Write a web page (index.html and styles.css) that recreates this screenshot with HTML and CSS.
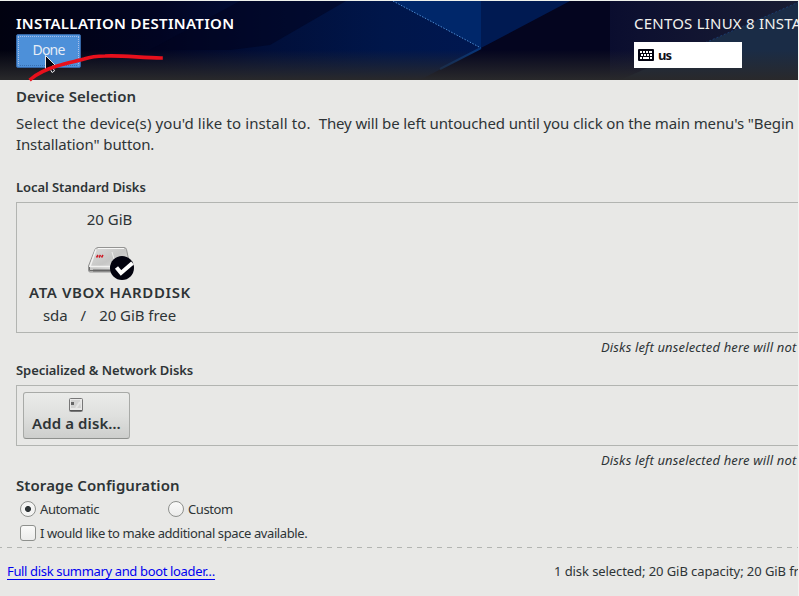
FILE: index.html
```html
<!DOCTYPE html>
<html lang="en">
<head>
<meta charset="utf-8">
<title>Installation Destination</title>
<link rel="stylesheet" href="styles.css">
</head>
<body>
<div class="screen">
  <header class="topbar">
    <svg class="backdrop" width="799" height="79" viewBox="0 1 799 79" aria-hidden="true">
      <defs>
        <linearGradient id="base" x1="0" x2="1" y1="0" y2="0">
          <stop offset="0" stop-color="#010210"/>
          <stop offset=".2" stop-color="#010422"/>
          <stop offset=".34" stop-color="#010f3a"/>
          <stop offset=".48" stop-color="#00164a"/>
          <stop offset=".6" stop-color="#001750"/>
          <stop offset=".61" stop-color="#030528"/>
          <stop offset=".7" stop-color="#05082c"/>
          <stop offset=".8" stop-color="#0d1030"/>
          <stop offset="1" stop-color="#191d33"/>
        </linearGradient>
        <linearGradient id="floor" x1="0" x2="0" y1="0" y2="1">
          <stop offset="0" stop-color="#29292b" stop-opacity="0"/>
          <stop offset=".4" stop-color="#29292b" stop-opacity=".4"/>
          <stop offset="1" stop-color="#29292b"/>
        </linearGradient>
      </defs>
      <rect y="1" width="799" height="79" fill="url(#base)"/>
      <path d="M240 1H346L270 45L230 50H150Z" fill="#01041f" opacity=".55"/>
      <path d="M393 1H481V48Z" fill="#00276a"/>
      <path d="M481 1H599L481 48Z" fill="#001a52"/>
      <path d="M570 1H610V80H420L481 48Z" fill="#04051f"/>
      <path d="M799 2L620 80H799Z" fill="#1a2c46"/>
      <path d="M393 1L481 48" stroke="#4d8bd0" stroke-dasharray="1.5 1.5"/>
      <path d="M481 48L440 69" stroke="#073578" stroke-width="2"/>
      <path d="M799 2L700 45" stroke="#1b3b6d" stroke-dasharray="2 2"/>
      <rect y="50" width="799" height="30" fill="url(#floor)"/>
    </svg>
    <div class="topbar-left">
      <h1 class="title">INSTALLATION DESTINATION</h1>
      <button class="done"><span>Done</span></button>
    </div>
    <div class="topbar-right">
      <div class="product">CENTOS LINUX 8 INSTALLATION</div>
      <div class="keyboard">
        <svg width="16" height="12" viewBox="0 0 16 12" aria-hidden="true">
          <rect width="16" height="12" rx="1" fill="#020210"/>
          <path d="M2 3h2m1 0h2m1 0h2m1 0h3M3 6h2m1 0h2m1 0h2m1 0h2M2 9h2m1 0h6m1 0h2" stroke="#fff" stroke-width="2"/>
        </svg>
        <span>us</span>
      </div>
    </div>
    <svg class="pointer" width="140" height="40" viewBox="26 48 140 40" aria-hidden="true">
      <path d="M45.500 55.500V70.500L49.500 67.500L52 72.500L54.500 71L52 66H56Z" fill="#050510" stroke="#e8e8e8"/>
      <path d="M31 79C38 73 47 69 57 66C66 63 77 61 84 59C93 56 99 56 105 56C121 55 143 58 161 58" fill="none" stroke="#e8101c" stroke-width="3.600" stroke-linecap="square"/>
    </svg>
  </header>

  <main class="content">
    <h2 class="heading device">Device Selection</h2>
    <p class="intro"><span class="lead">Select the device(s) you'd like to install to.&nbsp; </span><span class="rest">They will be left untouched until you click on the main menu's "Begin<br>Installation" button.</span></p>

    <h3 class="subheading local">Local Standard Disks</h3>
    <section class="panel disks">
      <div class="disk">
        <div class="capacity">20 GiB</div>
        <svg class="drive" width="48" height="36" viewBox="87 245 48 36" aria-hidden="true">
          <defs>
            <linearGradient id="metal" x1="0" y1="0" x2="1" y2="1">
              <stop offset="0" stop-color="#dededd"/><stop offset=".5" stop-color="#c6c6c5"/><stop offset="1" stop-color="#ededec"/>
            </linearGradient>
          </defs>
          <path d="M98 247.500H124Q126 247.500 126.500 249.500L130 266V272H90Q88.500 272 88.500 270V266L95 249.500Q96 247.500 98 247.500Z" fill="url(#metal)" stroke="#949493"/>
          <path d="M98 248.500H124" stroke="#f7f7f6"/>
          <path d="M96 249.500L90 266.500H118" fill="none" stroke="#f2f2f1" stroke-width="1.500"/>
          <path d="M89.500 267V270.500H93" fill="none" stroke="#6b6b6a"/>
          <path d="M93 270.500H112" stroke="#666" stroke-width="2"/>
          <path d="M96.500 257.500L98 255M99 257.500L100.500 255M101.500 257.500L103 255" stroke="#ce1822" stroke-width="1.500"/>
          <path d="M112 252L114 259" stroke="#eeeeed"/>
          <circle cx="122" cy="268" r="12" fill="#03030f"/>
          <path d="M116.500 267.500L121 273L132.500 263" fill="none" stroke="#fff" stroke-width="4"/>
        </svg>
        <div class="disk-name">ATA VBOX HARDDISK</div>
        <div class="disk-info"><span>sda</span><span>/</span><span>20 GiB free</span></div>
      </div>
    </section>
    <p class="note">Disks left unselected here will not</p>

    <h3 class="subheading special">Specialized &amp; Network Disks</h3>
    <section class="panel network">
      <button class="add">
        <svg width="14" height="14" viewBox="0 0 14 14" aria-hidden="true">
          <rect x=".5" y=".5" width="13" height="13" rx="1" fill="#e9e9e8" stroke="#777"/>
          <path d="M1 12.500H13" stroke="#555"/>
          <path d="M2 2H11L12 10H2Z" fill="#d2d2d1"/>
          <path d="M2 5.500H5" stroke="#666" stroke-width="3"/>
          <path d="M7 10L11 4" stroke="#e6e6e5" stroke-width="2"/>
        </svg>
        <span>Add a disk…</span>
      </button>
    </section>
    <p class="note">Disks left unselected here will not</p>

    <h2 class="heading storage">Storage Configuration</h2>
    <div class="options">
      <label class="option auto"><i class="radio checked"></i><span>Automatic</span></label>
      <label class="option custom"><i class="radio"></i><span>Custom</span></label>
    </div>
    <label class="option space"><i class="check"></i><span>I would like to make additional space available.</span></label>
  </main>

  <footer class="bottom">
    <div class="summary"><a href="#">Full disk summary and boot loader…</a></div>
    <div class="status">1 disk selected; 20 GiB capacity; 20 GiB free</div>
  </footer>
</div>
</body>
</html>
```

FILE: styles.css
```css
* { box-sizing: border-box; }
body {
  margin: 0;
  background: #e8e8e6;
  color: #2e3436;
  font: 15px/20px "Noto Sans", "Open Sans", sans-serif;
}
h1, h2, h3, p { margin: 0; white-space: nowrap; }
button { font: inherit; color: inherit; padding: 0; }
svg { display: block; }

.screen {
  width: 799px;
  height: 596px;
  overflow: hidden;
  border-top: 1px solid #eef1ec;
  border-right: 1px solid #f3f3f1;
  display: flex;
  flex-direction: column;
}

.topbar {
  position: relative;
  height: 79px;
  flex: none;
  display: flex;
  color: #fff;
}
.backdrop { position: absolute; inset: 0; z-index: -1; }
.topbar-left { width: 634px; padding: 12px 0 0 16px; }
.title { font-size: 15px; line-height: 20px; font-weight: 600; letter-spacing: .32px; }
.done {
  display: flex;
  justify-content: center;
  width: 65px;
  height: 34px;
  margin-top: 1px;
  background: #4d90d9;
  border: 1px solid #3465a4;
  border-radius: 2px;
  padding: 1px;
  color: #e6edf6;
  font-size: 14px;
  letter-spacing: -.8px;
}
.done span { flex: 1; align-self: stretch; border: 1px dotted #a9bde8; border-bottom-color: #3a6fb0; line-height: 26px; text-align: center; }
.topbar-right { flex: 1; overflow: hidden; padding-top: 12px; }
.product { white-space: nowrap; letter-spacing: .22px; color: #f2f2ee; }
.keyboard {
  display: flex;
  align-items: center;
  gap: 4px;
  width: 108px;
  height: 26px;
  margin-top: 9px;
  padding-left: 4px;
  background: #fff;
  color: #101018;
  font-size: 13px;
  font-weight: 700;
  letter-spacing: -1px;
}
.pointer { position: absolute; left: 26px; top: 47px; }

.content { height: 467px; flex: none; padding: 6px 0 0 16px; overflow: hidden; }
.heading { font-size: 15px; line-height: 20px; font-weight: 600; letter-spacing: .08px; }
.intro { margin-top: 7px; line-height: 21px; }
.lead { letter-spacing: .11px; }
.rest { letter-spacing: -.12px; }
.subheading { font-size: 13px; line-height: 20px; font-weight: 600; letter-spacing: -.06px; }
.local { margin-top: 22px; }
.special { margin-top: 3px; }
.panel { border: 1px solid #b2b4b1; border-right: 0; margin-top: 5px; }
.disks { height: 131px; padding-top: 6px; }
.disk { width: 186px; display: flex; flex-direction: column; align-items: center; }
.capacity { margin-right: 1px; }
.drive { margin: 16px 0 1px 2px; }
.disk-name { font-weight: 600; white-space: nowrap; letter-spacing: .62px; }
.disk-info { display: flex; gap: 13px; margin: 3px 1px 0 0; letter-spacing: -.05px; }
.note { margin: 4px 0 0 585px; font-size: 13px; font-style: italic; letter-spacing: .15px; }
.network { height: 61px; padding: 6px; }
.add {
  display: flex;
  flex-direction: column;
  align-items: center;
  width: 107px;
  height: 47px;
  padding-top: 5px;
  border: 1px solid #a8aaa7;
  border-bottom-color: #8e908d;
  border-radius: 3px;
  background: linear-gradient(#eaebe9, #dfe0de 50%, #cdcecc);
  font-weight: 600;
  white-space: nowrap;
}
.add svg { margin-right: 1px; }
.add span { margin-top: 1px; letter-spacing: .1px; }
.storage { margin-top: 5px; }
.options { display: flex; margin-top: 4px; }
.option { display: flex; align-items: center; gap: 4px; height: 20px; padding-left: 4px; font-size: 13px; letter-spacing: -.4px; white-space: nowrap; }
.auto { width: 148px; }
.space { margin-top: 4px; }
.radio, .check {
  width: 16px;
  height: 16px;
  flex: none;
  border: 1px solid #8e908d;
  background: linear-gradient(#fafaf9, #ececeb);
}
.radio { border-radius: 50%; }
.checked { background: radial-gradient(circle, #2e3436 2.6px, #f4f4f3 3.4px); }
.check { border-radius: 3px; }

.bottom {
  flex: 1;
  display: flex;
  padding: 14px 0 0 7px;
  font-size: 13px;
  white-space: nowrap;
  background: repeating-linear-gradient(90deg, #b3b5b2 0 5px, transparent 5px 10px) -3px 0 / 802px 1px no-repeat;
}
.summary { flex: none; width: 547px; letter-spacing: -.35px; }
.summary a { color: #0000f0; text-decoration: underline; text-underline-offset: 3px; }
.status { letter-spacing: -.08px; }
```
